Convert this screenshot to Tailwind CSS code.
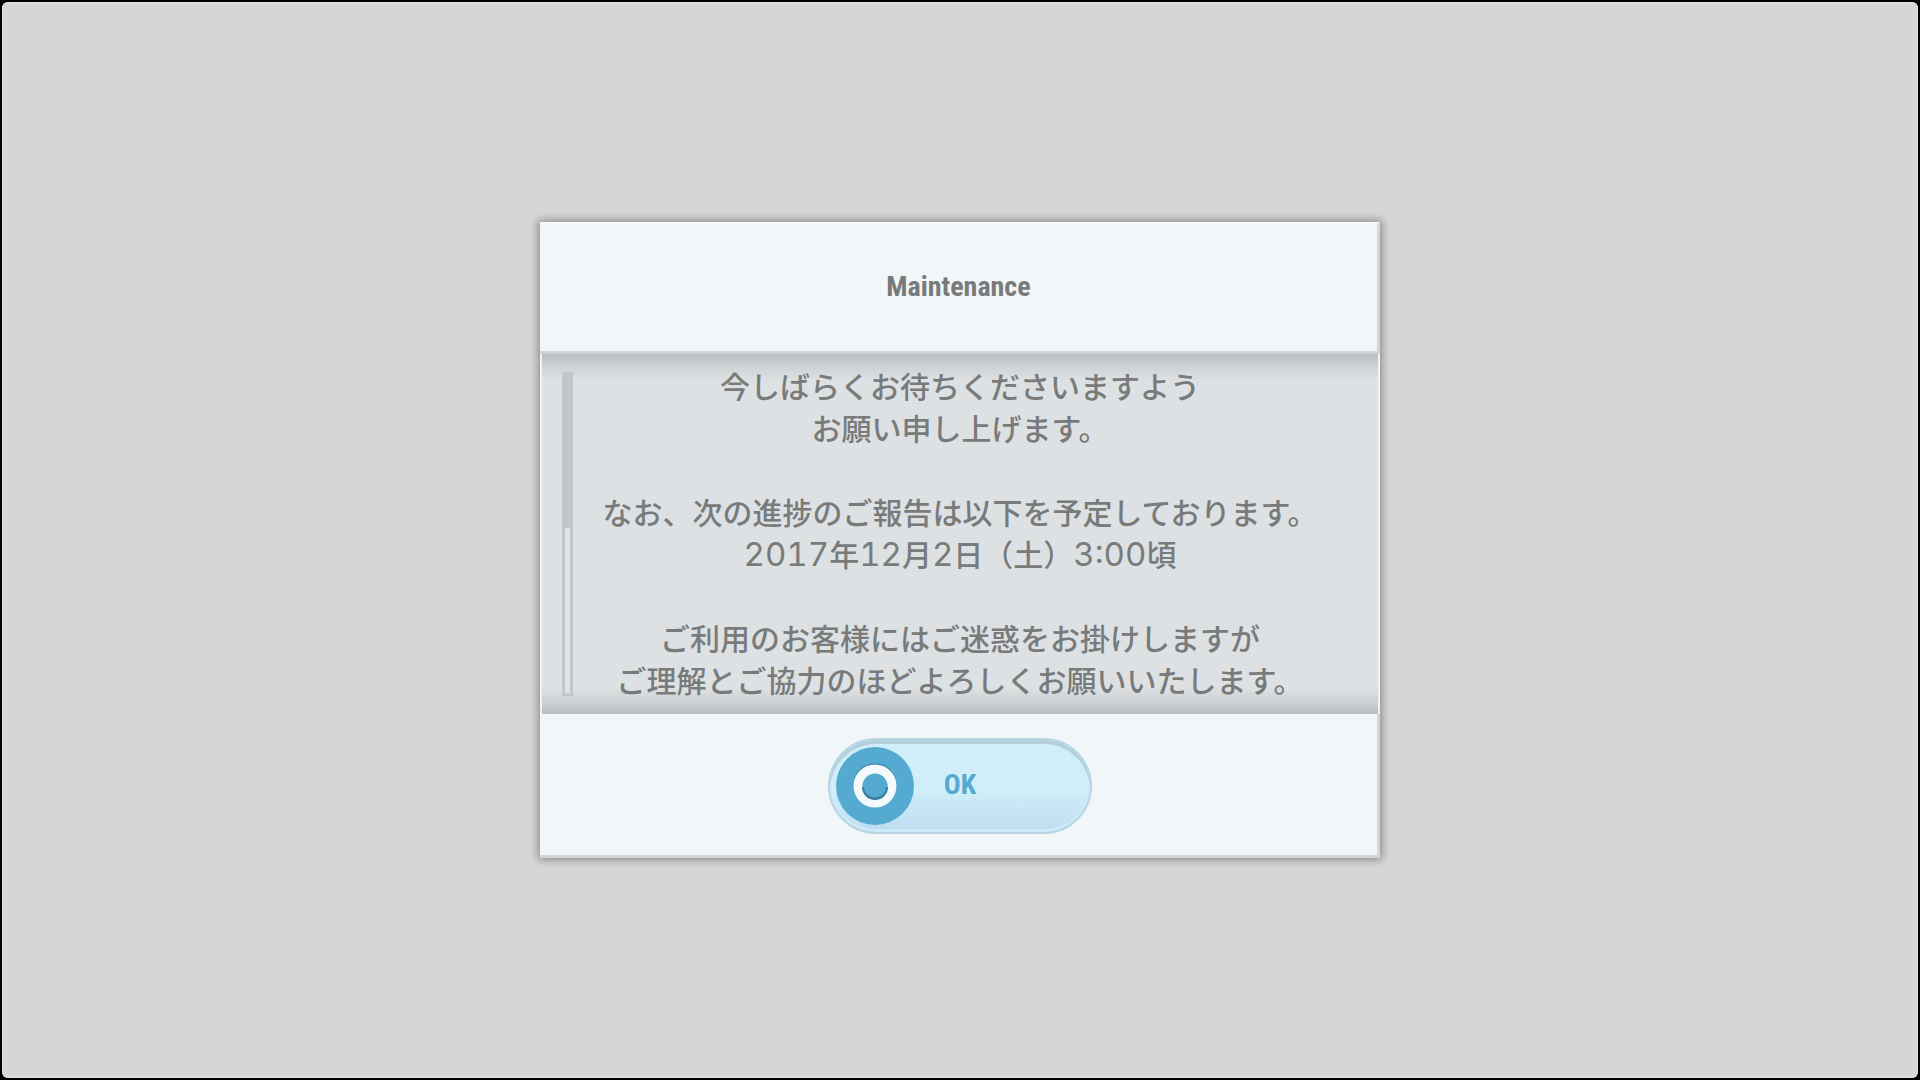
<!DOCTYPE html>
<html lang="ja">
  <head>
    <meta charset="UTF-8" />
    <meta name="viewport" content="width=device-width, initial-scale=1.0" />
    <title>Maintenance</title>
    <script src="https://cdn.jsdelivr.net/npm/@tailwindcss/browser@4"></script>
  </head>
  <body class="min-h-screen bg-black p-[2px] flex font-['Noto_Sans_CJK_JP',sans-serif] text-[#797b7a]">
    <main class="flex-grow flex items-center justify-center rounded-md bg-[#d6d6d6] shadow-[inset_0_0_2px_1px_#e3e3e3]">
      <!-- Dialog -->
      <section
        role="dialog"
        aria-labelledby="dialogTitle"
        class="w-full max-w-[840px] bg-[#f1f6f9] shadow-[0_0_8px_2px_rgba(0,0,0,0.35)]"
      >
        <header class="h-33 flex items-center justify-center pb-[2px] border-t-2 border-r-3 border-b-3 border-t-[#f6fafb] border-r-[#d1d7dc] border-b-[#ced5d9]">
          <h1
            id="dialogTitle"
            class="font-['Roboto_Condensed',Roboto,sans-serif] font-bold text-[28px] leading-10"
          >
            Maintenance
          </h1>
        </header>

        <!-- Message -->
        <div class="grid grid-cols-[11px_1fr_11px] px-5 pt-[10px] pb-[14px] border-x-2 border-[#eff3f4] bg-[#dde1e4] bg-[linear-gradient(to_bottom,#b9bebf_0,#cbcfd1_10px,#dde1e4_26px,#dde1e4_334px,#cbcfd1_350px,#b9bebf_100%)]">
          <div class="mt-2 mb-1 border-3 border-[#c2c6c8] bg-[#dfe3e5]">
            <div class="h-[48%] bg-[#c2c6c8]"></div>
          </div>
          <div class="text-center text-[30px] leading-[42px] font-medium">
            <p>今しばらくお待ちくださいますよう<br />お願い申し上げます。</p>
            <p class="mt-[42px]">
              なお、次の進捗のご報告は以下を予定しております。<br /><span class="font-[Inter] font-normal text-[33px] leading-none tabular-nums">2017</span>年<span class="font-[Inter] font-normal text-[33px] leading-none tabular-nums">12</span>月<span class="font-[Inter] font-normal text-[33px] leading-none tabular-nums">2</span>日（土）<span class="font-[Inter] font-normal text-[33px] leading-none tabular-nums">3:00</span>頃
            </p>
            <p class="mt-[42px]">
              ご利用のお客様にはご迷惑をお掛けしますが<br />ご理解とご協力のほどよろしくお願いいたします。
            </p>
          </div>
        </div>

        <footer class="flex justify-center pt-6 pb-[21px] pl-[3px] border-r-3 border-b-3 border-r-[#d1d7dc] border-b-[#ced5d9]">
          <button
            type="button"
            class="w-66 h-24 grid grid-cols-[78px_1fr_78px] items-center px-[6px] rounded-full border-2 border-[#b9d5e2] bg-linear-to-b from-[#cfeef9] from-55% to-[#bddcf1] shadow-[inset_0_4px_0_#b3cfdb,inset_0_-3px_0_#cbeaf8] cursor-pointer"
          >
            <svg class="w-[78px] h-[78px]" viewBox="0 0 78 78" fill="none" aria-hidden="true">
              <circle cx="39" cy="39" r="39" fill="#54aad0" />
              <circle cx="39" cy="38" r="17" stroke="#397a99" stroke-width="9" />
              <circle cx="39" cy="39" r="17" stroke="#f4f9fc" stroke-width="9" />
              <path d="M27 40a12 12 0 0 0 24 0" stroke="#397a99" stroke-width="2" />
            </svg>
            <span class="pb-[2px] font-['Roboto_Condensed',Roboto,sans-serif] font-bold text-[28px] leading-10 text-[#54aad0]">OK</span>
          </button>
        </footer>
      </section>
    </main>
  </body>
</html>
